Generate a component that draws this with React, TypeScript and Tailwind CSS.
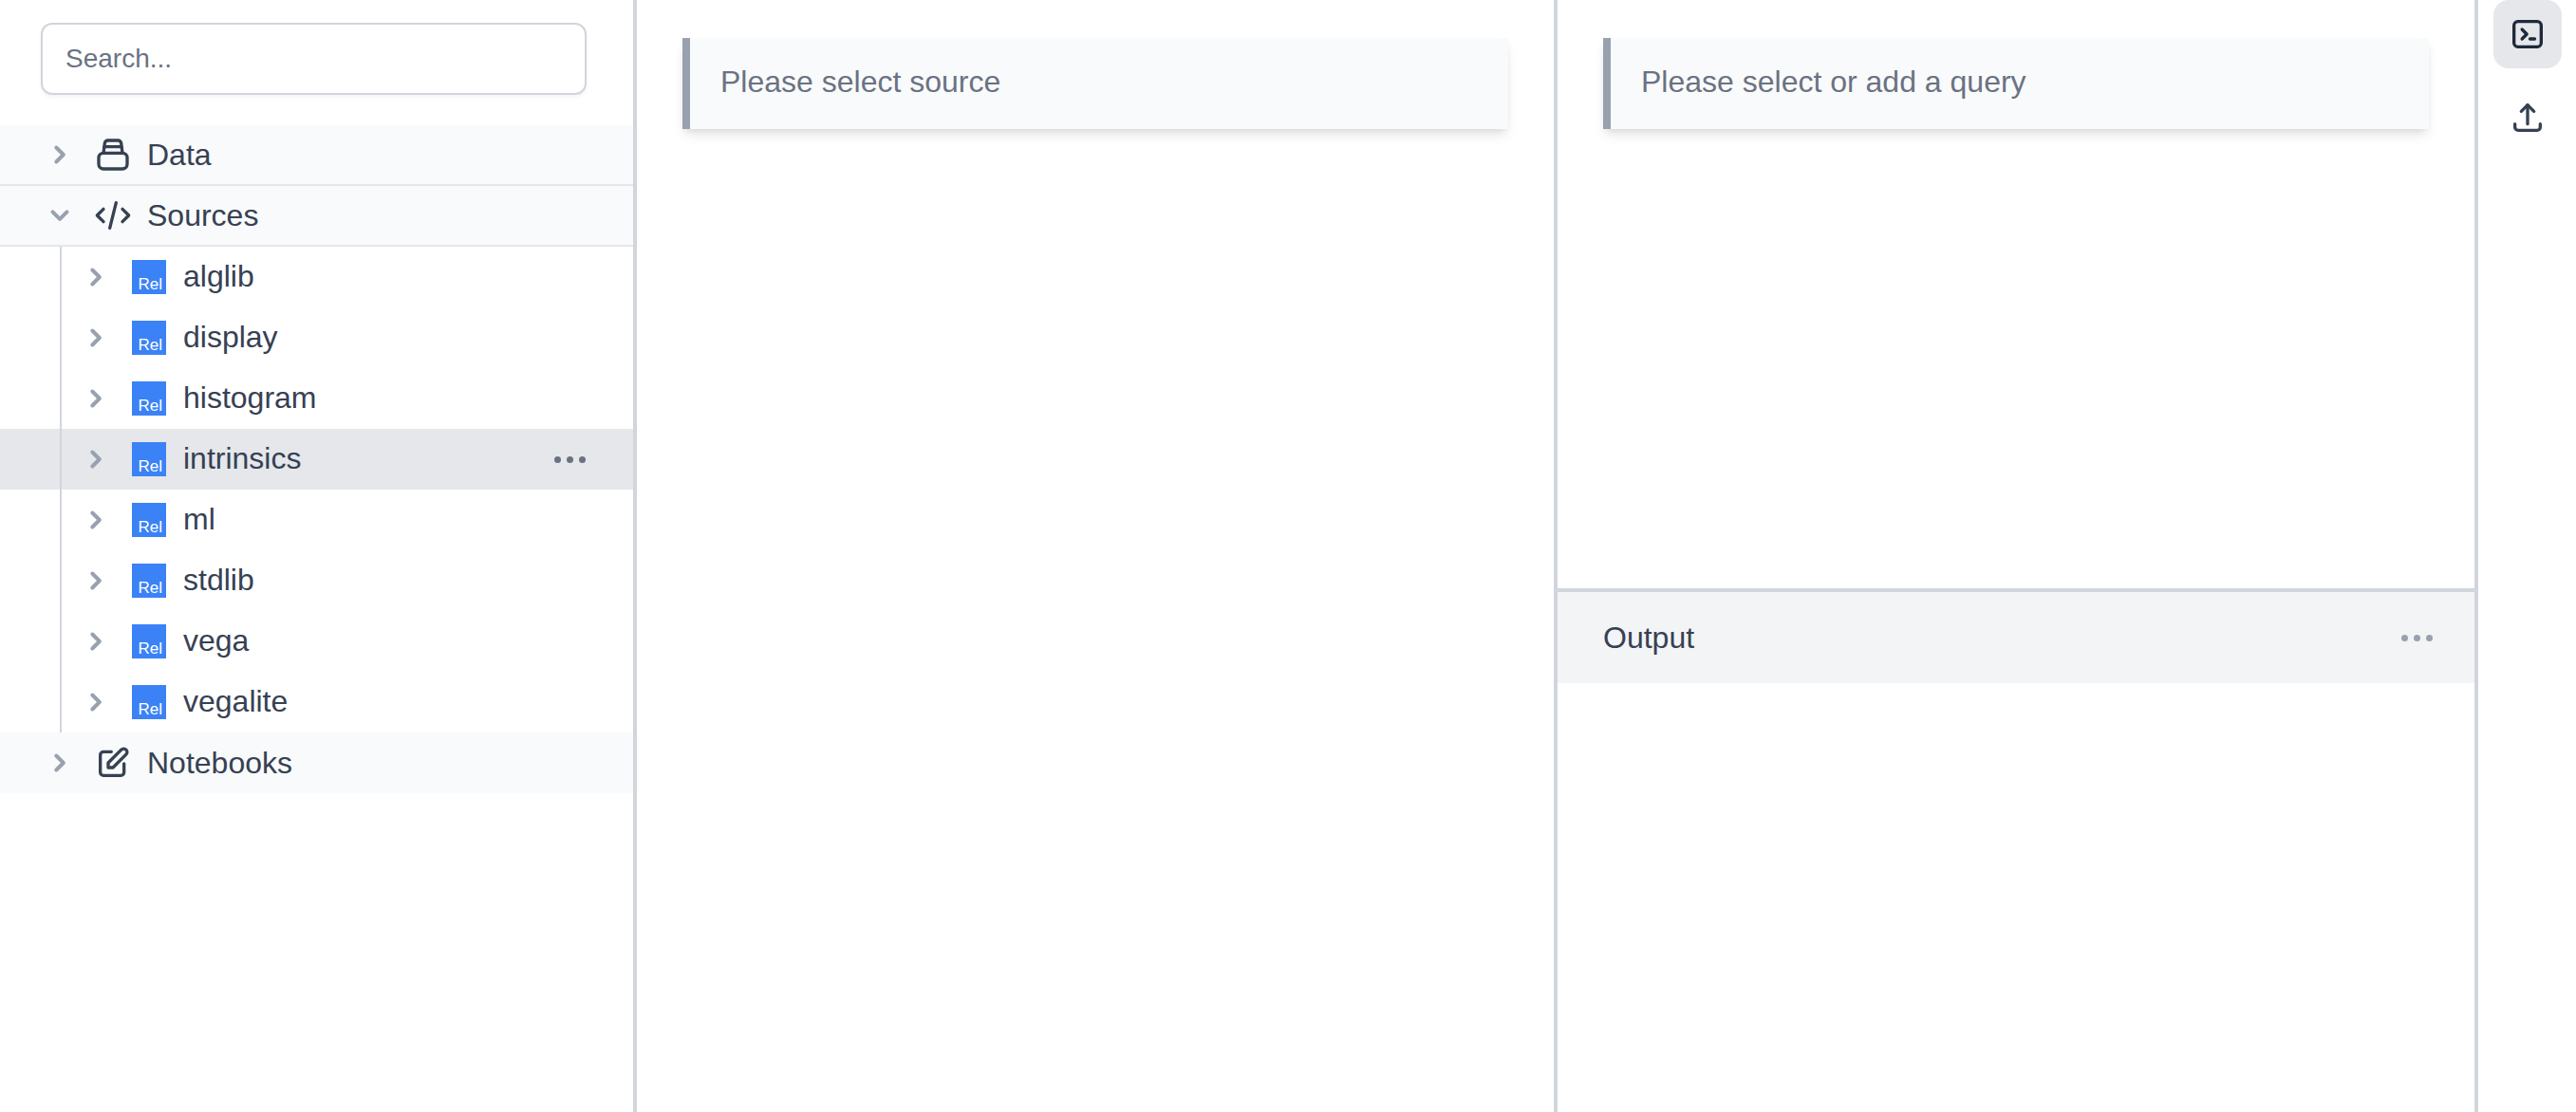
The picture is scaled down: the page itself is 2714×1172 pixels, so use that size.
const sources = ["alglib", "display", "histogram", "intrinsics", "ml", "stdlib", "vega", "vegalite"];

const Chevron = ({ down = false }: { down?: boolean }) => (
  <svg
    viewBox="0 0 24 24"
    fill="none"
    stroke="currentColor"
    strokeWidth={2.4}
    strokeLinecap="round"
    strokeLinejoin="round"
    className="w-10 h-10 shrink-0 text-gray-400"
  >
    {down ? <path d="M7.5 9.8l4.5 4.5 4.5-4.5" /> : <path d="M9.8 7.5l4.5 4.5-4.5 4.5" />}
  </svg>
);

const Dots = ({ className }: { className: string }) => (
  <div className={`flex items-center gap-[6px] ${className}`}>
    <span className="w-[7px] h-[7px] rounded-full bg-current" />
    <span className="w-[7px] h-[7px] rounded-full bg-current" />
    <span className="w-[7px] h-[7px] rounded-full bg-current" />
  </div>
);

const IconBox = ({ children }: { children: React.ReactNode }) => (
  <svg
    viewBox="0 0 24 24"
    fill="none"
    stroke="currentColor"
    strokeWidth={2}
    strokeLinecap="round"
    strokeLinejoin="round"
    className="w-10 h-10 shrink-0"
  >
    {children}
  </svg>
);

const SectionRow = ({
  label,
  open = false,
  border = false,
  children,
}: {
  label: string;
  open?: boolean;
  border?: boolean;
  children: React.ReactNode;
}) => (
  <div
    className={`flex items-center h-16 pl-[43px] gap-4 bg-gray-50 text-gray-700 text-[32px] ${
      border ? "border-b-2 border-gray-200" : ""
    }`}
  >
    <Chevron down={open} />
    <IconBox>{children}</IconBox>
    <span>{label}</span>
  </div>
);

const SourceRow = ({ name }: { name: string }) => {
  const active = name === "intrinsics";
  return (
    <div
      className={`flex items-center h-16 pl-[81px] pr-[50px] text-gray-700 text-[32px] ${
        active ? "bg-gray-200" : ""
      }`}
    >
      <Chevron />
      <div className="ml-[18px] mr-[18px] w-9 h-9 shrink-0 bg-[#3b82f6] flex items-end justify-end pr-[4px] text-white text-[17px] leading-[20px]">
        Rel
      </div>
      <span className="flex-1 pb-[2px]">{name}</span>
      {active && <Dots className="text-gray-500" />}
    </div>
  );
};

const Notice = ({ text }: { text: string }) => (
  <div className="bg-gray-50 border-l-8 border-gray-400 shadow-[0_8px_12px_-2px_rgba(0,0,0,0.1),0_4px_8px_-4px_rgba(0,0,0,0.1)] pt-[22px] pb-[26px] pl-[32px] text-[32px] leading-[48px] text-gray-500">
    {text}
  </div>
);

const App = () => {
  return (
    <div className="flex h-screen bg-white overflow-hidden font-['Liberation_Sans',Arial,sans-serif]">
      {/* Tree sidebar */}
      <div className="w-[671px] shrink-0 border-r-4 border-gray-300">
        <div className="pt-6 pb-8 pl-[43px] pr-[49px]">
          <input
            placeholder="Search..."
            className="w-full h-[76px] px-6 border-2 border-gray-300 rounded-xl shadow-[0_2px_4px_0_rgba(0,0,0,0.05)] text-[28px] bg-white placeholder:text-gray-500 outline-none"
          />
        </div>
        <SectionRow label="Data" border>
          <rect x="3" y="11" width="18" height="10" rx="3" />
          <path d="M6 11l.8-6a2 2 0 0 1 2-2h6.4a2 2 0 0 1 2 2l.8 6" />
          <path d="M6.5 7h11" />
        </SectionRow>
        <SectionRow label="Sources" open border>
          <path d="M6 8l-4 4 4 4" />
          <path d="M18 8l4 4-4 4" />
          <path d="M14 4l-4 16" />
        </SectionRow>
        <div className="relative">
          <div className="absolute left-[63px] top-0 bottom-0 w-[2px] bg-gray-300" />
          {sources.map((name) => (
            <SourceRow key={name} name={name} />
          ))}
        </div>
        <SectionRow label="Notebooks">
          <path d="M11 5H6a2 2 0 0 0-2 2v11a2 2 0 0 0 2 2h11a2 2 0 0 0 2-2v-5.5" />
          <path d="M9 15v-3l8.3-8.3a2.1 2.1 0 0 1 3 3L12 15z" />
        </SectionRow>
      </div>

      {/* Source panel */}
      <div className="w-[970px] shrink-0 border-r-4 border-gray-300 pt-10 px-12">
        <Notice text="Please select source" />
      </div>

      {/* Query + output */}
      <div className="w-[970px] shrink-0 border-r-4 border-gray-300 flex flex-col">
        <div className="h-[624px] shrink-0 pt-10 px-12 border-b-4 border-gray-300">
          <Notice text="Please select or add a query" />
        </div>
        <div className="h-24 shrink-0 flex items-center justify-between pl-12 pr-11 bg-gray-100 text-[32px] text-gray-700">
          <span>Output</span>
          <Dots className="text-gray-400" />
        </div>
      </div>

      {/* Right rail */}
      <div className="flex-1 flex flex-col items-center gap-4">
        <button className="w-[72px] h-[72px] rounded-2xl bg-gray-200 flex items-center justify-center text-gray-800">
          <IconBox>
            <rect x="3.4" y="4" width="17.2" height="16" rx="2.5" />
            <path d="M8.5 9l3 3-3 3" />
            <path d="M13.5 15h3" />
          </IconBox>
        </button>
        <button className="w-[72px] h-[72px] rounded-2xl flex items-center justify-center text-gray-700">
          <IconBox>
            <path d="M4 16v2a2 2 0 0 0 2 2h12a2 2 0 0 0 2-2v-2" />
            <path d="M8 8l4-4 4 4" />
            <path d="M12 4v12" />
          </IconBox>
        </button>
      </div>
    </div>
  );
};

export default App;
